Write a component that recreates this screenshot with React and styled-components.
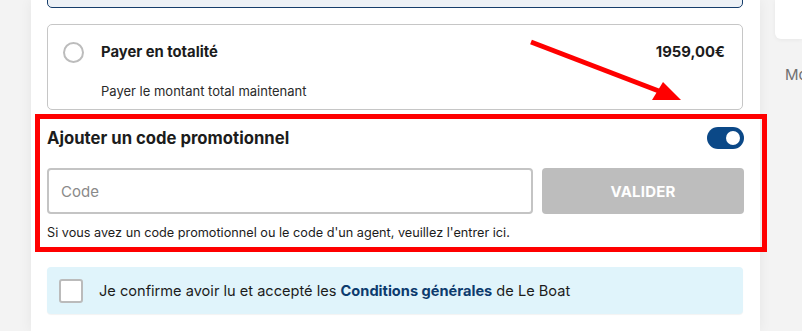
import React, { useState } from 'react'
import styled, { createGlobalStyle } from 'styled-components'

const GlobalStyle = createGlobalStyle`
	html, body {
		margin: 0;
		padding: 0;
		background: #f3f3f3;
		font-family: 'Inter', 'Liberation Sans', sans-serif;
		color: #1c1c1c;
		overflow: hidden;
	}
	* {
		box-sizing: border-box;
	}
`

const Page = styled.div`
	display: flex;
	height: 331px;
	padding-left: 31px;
	position: relative;
`

const Main = styled.main`
	width: 729px;
	flex-shrink: 0;
	height: 100%;
	background: #fff;
	box-shadow: 0 0 12px rgba(0, 0, 0, 0.06);
	padding: 0 17px 0 16px;
	display: flex;
	flex-direction: column;
`

const Aside = styled.aside`
	flex: 1;
	min-width: 0;
	padding-left: 15px;
	display: flex;
	flex-direction: column;
`

const AsideCard = styled.div`
	height: 39px;
	background: #fff;
	border-radius: 0 0 0 6px;
	box-shadow: 0 1px 4px rgba(0, 0, 0, 0.05);
`

const AsideText = styled.div`
	margin: 26px 0 0 10px;
	font-size: 15px;
	color: #707070;
	white-space: nowrap;
`

const PrevOption = styled.div`
	height: 31px;
	margin-top: -23px;
	background: #edf1f6;
	border: 1.5px solid #163d6b;
	border-radius: 5px;
`

const OptionCard = styled.div`
	margin-top: 16px;
	height: 86px;
	border: 1px solid #c6c6c6;
	border-radius: 5px;
	padding: 16px 17px 0 15px;
	display: grid;
	grid-template-columns: 38px 1fr auto;
	grid-template-rows: 22px auto;
	row-gap: 10px;
	align-items: center;
`

const Radio = styled.span`
	width: 21px;
	height: 21px;
	border-radius: 50%;
	border: 2px solid #bcbcbc;
`

const OptionTitle = styled.span`
	font-size: 14.8px;
	font-weight: 700;
`

const Price = styled.span`
	font-size: 14.8px;
	font-weight: 700;
`

const OptionSub = styled.span`
	grid-column: 2 / 4;
	font-size: 13px;
	color: #2a2a2a;
`

const PromoBox = styled.section`
	margin: 4px -24px 0 -12px;
	border: 5px solid #ff0000;
	padding: 7px 18px 6px 7px;
`

const PromoHead = styled.div`
	display: flex;
	justify-content: space-between;
	align-items: center;
	height: 24px;
`

const PromoTitle = styled.h3`
	margin: 0;
	font-size: 16.7px;
	font-weight: 700;
	color: #1c1c1c;
`

const Toggle = styled.button`
	width: 37px;
	height: 22px;
	border-radius: 11px;
	border: none;
	background: #0b4887;
	padding: 0 4px;
	display: flex;
	align-items: center;
	justify-content: ${p => (p.$on ? 'flex-end' : 'flex-start')};
	cursor: pointer;

	&::after {
		content: '';
		width: 14px;
		height: 14px;
		border-radius: 50%;
		background: #fff;
	}
`

const PromoRow = styled.div`
	display: flex;
	gap: 9px;
	margin-top: 18px;
`

const CodeInput = styled.input`
	width: 486px;
	height: 46px;
	border: 2px solid #c4c4c4;
	border-radius: 4px;
	padding: 0 12px;
	font-family: inherit;
	font-size: 15px;
	color: #1c1c1c;
	outline: none;

	&::placeholder {
		color: #8a8a8a;
	}
`

const SubmitButton = styled.button`
	flex: 1;
	height: 46px;
	border: none;
	border-radius: 4px;
	background: #bdbdbd;
	color: #fff;
	font-family: inherit;
	font-size: 15px;
	font-weight: 700;
	letter-spacing: 0.2px;
`

const HelpText = styled.p`
	margin: 11px 0 0;
	font-size: 12.7px;
	line-height: 16px;
	color: #1c1c1c;
	white-space: nowrap;
`

const TermsBox = styled.label`
	margin-top: 15px;
	height: 47px;
	background: #e0f4fb;
	border-radius: 4px;
	box-shadow: 0 1px 1px rgba(0, 0, 0, 0.05);
	display: flex;
	align-items: center;
	padding-left: 12px;
	gap: 16px;
	font-size: 14.6px;
	color: #1c1c1c;
	cursor: pointer;
`

const CheckBox = styled.span`
	width: 24px;
	height: 24px;
	border: 2px solid #bbbbbb;
	border-radius: 3px;
	background: #fff;
	flex-shrink: 0;
`

const TermsLink = styled.a`
	color: #0d3b6e;
	font-weight: 700;
	text-decoration: none;
`

const Arrow = styled.svg`
	position: absolute;
	left: 0;
	top: 0;
	pointer-events: none;
`

const App = () => {
	const [promoOn, setPromoOn] = useState(true)

	return (
		<>
			<GlobalStyle />
			<Page>
				<Main>
					<PrevOption />
					<OptionCard>
						<Radio />
						<OptionTitle>Payer en totalité</OptionTitle>
						<Price>1959,00€</Price>
						<OptionSub>Payer le montant total maintenant</OptionSub>
					</OptionCard>
					<PromoBox>
						<PromoHead>
							<PromoTitle>Ajouter un code promotionnel</PromoTitle>
							<Toggle $on={promoOn} onClick={() => setPromoOn(!promoOn)} />
						</PromoHead>
						<PromoRow>
							<CodeInput placeholder='Code' />
							<SubmitButton>VALIDER</SubmitButton>
						</PromoRow>
						<HelpText>
							Si vous avez un code promotionnel ou le code d'un agent, veuillez l'entrer ici.
						</HelpText>
					</PromoBox>
					<TermsBox>
						<CheckBox />
						<span>
							Je confirme avoir lu et accepté les <TermsLink href='#'>Conditions générales</TermsLink> de Le Boat
						</span>
					</TermsBox>
				</Main>
				<Aside>
					<AsideCard />
					<AsideText>Mo</AsideText>
				</Aside>
				<Arrow width='802' height='331'>
					<line x1='531' y1='42' x2='664' y2='93' stroke='#ff0000' strokeWidth='5' />
					<polygon points='681,100 652,100 663,82' fill='#ff0000' />
				</Arrow>
			</Page>
		</>
	)
}

export default App
